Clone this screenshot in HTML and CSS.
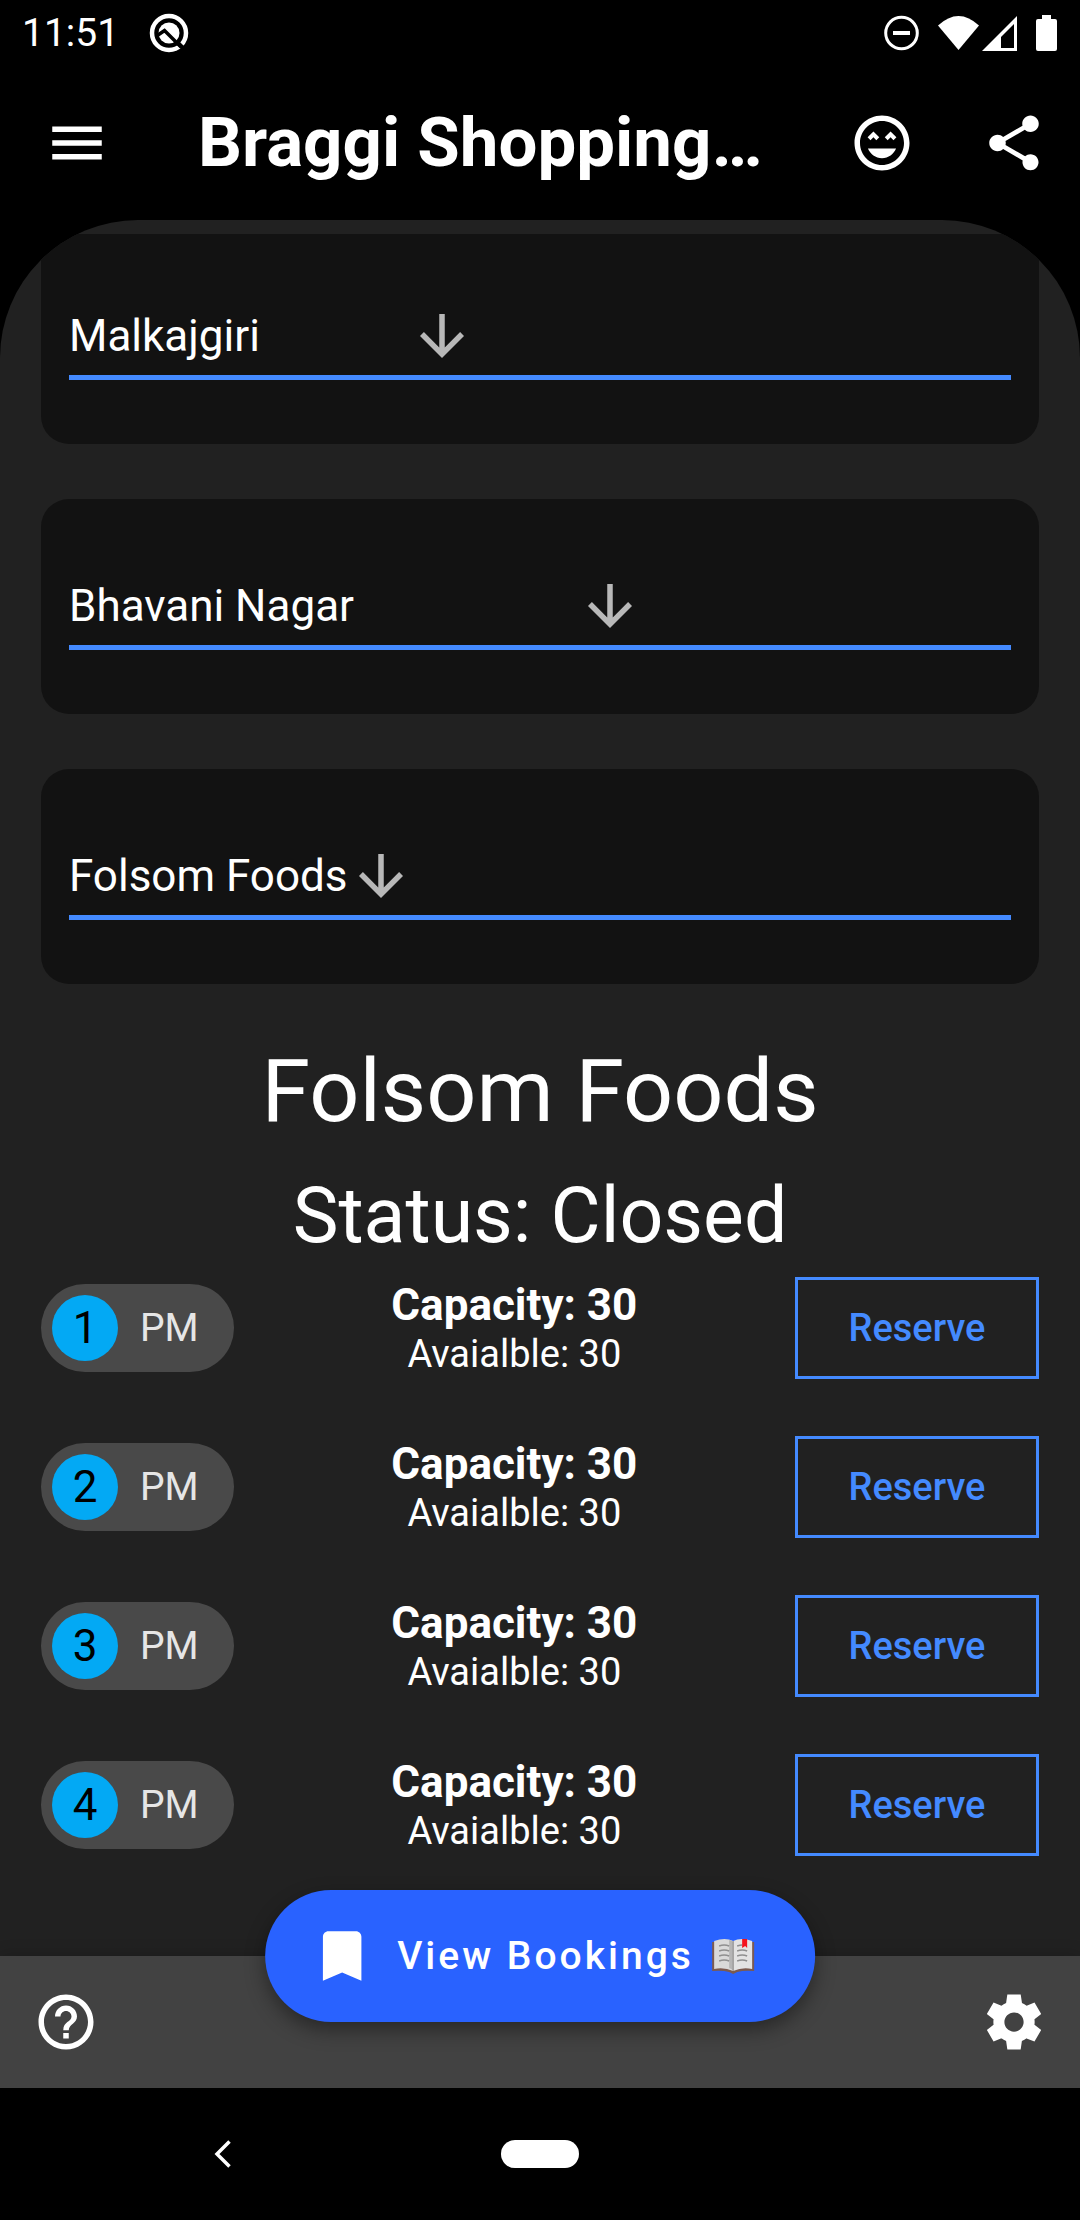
FILE: index.html
```html
<!DOCTYPE html>
<html lang="en">
<head>
<meta charset="utf-8">
<meta name="viewport" content="width=device-width, initial-scale=1">
<title>Braggi Shopping</title>
<link rel="stylesheet" href="styles.css">
</head>
<body>
<div class="statusbar">
  <time class="clock">11:51</time>
  <svg class="q-icon" viewBox="0 0 40 40" aria-hidden="true">
    <circle cx="20" cy="20" r="17" fill="none" stroke="#fff" stroke-width="4.500"/>
    <circle cx="20" cy="20" r="10.500" fill="#fff"/>
    <path d="M9 22 L15.500 17.500 L32 34" fill="none" stroke="#000" stroke-width="3.500"/>
    <path d="M29 30 L37 38" stroke="#000" stroke-width="4"/>
  </svg>
  <svg class="system-icons" viewBox="0 0 160 40" aria-hidden="true">
    <circle cx="18.500" cy="20" r="15.800" fill="none" stroke="#fff" stroke-width="3"/>
    <path d="M10 18h17v4H10z" fill="#fff"/>
    <path d="M55 12.500Q75.500-6.500 96 12.500L75.500 37z" fill="#fff"/>
    <path d="M99 38L134 3v35z" fill="#fff"/>
    <path d="M118 24L131 11v24h-13z" fill="#000"/>
  </svg>
  <svg class="battery-icon" viewBox="0 0 22 36" aria-hidden="true">
    <path d="M6 0h9v4h4q2 0 2 2v28q0 2-2 2H2q-2 0-2-2V6q0-2 2-2h4z" fill="#fff"/>
  </svg>
</div>

<header class="appbar">
  <button class="icon-button menu-button" type="button" aria-label="Open menu">
    <svg class="icon" viewBox="0 0 24 24"><path d="M3 18h18v-2H3v2zm0-5h18v-2H3v2zm0-7v2h18V6H3z"/></svg>
  </button>
  <h1 class="title">Braggi Shopping…</h1>
  <button class="icon-button" type="button" aria-label="Feedback">
    <svg class="icon" viewBox="0 0 24 24"><path d="M11.990 2C6.470 2 2 6.470 2 12s4.470 10 9.990 10S22 17.530 22 12 17.520 2 11.990 2zM12 20c-4.420 0-8-3.580-8-8s3.580-8 8-8 8 3.580 8 8-3.580 8-8 8zm1-10.060L14.060 11l1.060-1.060L16.180 11l1.060-1.060-2.120-2.120L13 9.940zM8.880 9.940L9.940 11 11 9.940 8.880 7.820 6.760 9.940 7.820 11l1.060-1.060zM12 17.500c2.330 0 4.310-1.460 5.110-3.500H6.890c.8 2.040 2.780 3.500 5.110 3.500z"/></svg>
  </button>
  <button class="icon-button" type="button" aria-label="Share">
    <svg class="icon" viewBox="0 0 24 24"><path d="M18 16.080c-.76 0-1.440.3-1.960.77L8.910 12.700c.05-.23.09-.46.09-.7s-.04-.47-.09-.7l7.050-4.110c.54.5 1.250.81 2.040.81 1.660 0 3-1.340 3-3s-1.340-3-3-3-3 1.340-3 3c0 .24.04.47.09.7L8.040 9.810C7.500 9.310 6.790 9 6 9c-1.660 0-3 1.340-3 3s1.340 3 3 3c.79 0 1.500-.31 2.040-.81l7.120 4.160c-.05.21-.08.43-.08.65 0 1.610 1.310 2.920 2.920 2.920s2.920-1.310 2.920-2.920-1.310-2.920-2.920-2.920z"/></svg>
  </button>
</header>

<main class="sheet">
  <div class="scroller">
    <div class="cards">
      <div class="card">
        <div class="field">
          <select class="picker picker-city" aria-label="City"><option>Malkajgiri</option></select>
          <svg class="icon arrow" viewBox="0 0 24 24" aria-hidden="true"><path d="M20 12l-1.410-1.410L13 16.170V4h-2v12.170l-5.580-5.590L4 12l8 8 8-8z"/></svg>
        </div>
      </div>
      <div class="card">
        <div class="field">
          <select class="picker picker-area" aria-label="Area"><option>Bhavani Nagar</option></select>
          <svg class="icon arrow" viewBox="0 0 24 24" aria-hidden="true"><path d="M20 12l-1.410-1.410L13 16.170V4h-2v12.170l-5.580-5.590L4 12l8 8 8-8z"/></svg>
        </div>
      </div>
      <div class="card">
        <div class="field">
          <select class="picker" aria-label="Shop"><option>Folsom Foods</option></select>
          <svg class="icon arrow" viewBox="0 0 24 24" aria-hidden="true"><path d="M20 12l-1.410-1.410L13 16.170V4h-2v12.170l-5.580-5.590L4 12l8 8 8-8z"/></svg>
        </div>
      </div>
    </div>

    <h2 class="shop-name">Folsom Foods</h2>
    <p class="shop-status">Status: Closed</p>

    <ul class="slots">
      <li class="slot">
        <div class="chip"><span class="hour">1</span><span class="period">PM</span></div>
        <div class="seats"><strong class="capacity">Capacity: 30</strong><span class="available">Avaialble: 30</span></div>
        <button class="reserve" type="button">Reserve</button>
      </li>
      <li class="slot">
        <div class="chip"><span class="hour">2</span><span class="period">PM</span></div>
        <div class="seats"><strong class="capacity">Capacity: 30</strong><span class="available">Avaialble: 30</span></div>
        <button class="reserve" type="button">Reserve</button>
      </li>
      <li class="slot">
        <div class="chip"><span class="hour">3</span><span class="period">PM</span></div>
        <div class="seats"><strong class="capacity">Capacity: 30</strong><span class="available">Avaialble: 30</span></div>
        <button class="reserve" type="button">Reserve</button>
      </li>
      <li class="slot">
        <div class="chip"><span class="hour">4</span><span class="period">PM</span></div>
        <div class="seats"><strong class="capacity">Capacity: 30</strong><span class="available">Avaialble: 30</span></div>
        <button class="reserve" type="button">Reserve</button>
      </li>
    </ul>
  </div>
</main>

<footer class="bottombar">
  <button class="icon-button" type="button" aria-label="Help">
    <svg class="icon" viewBox="0 0 24 24"><path d="M11 18h2v-2h-2v2zm1-16C6.480 2 2 6.480 2 12s4.480 10 10 10 10-4.480 10-10S17.520 2 12 2zm0 18c-4.410 0-8-3.590-8-8s3.590-8 8-8 8 3.590 8 8-3.590 8-8 8zm0-14c-2.210 0-4 1.790-4 4h2c0-1.100.9-2 2-2s2 .9 2 2c0 2-3 1.750-3 5h2c0-2.250 3-2.500 3-5 0-2.210-1.790-4-4-4z"/></svg>
  </button>
  <button class="fab" type="button">
    <svg class="icon" viewBox="0 0 24 24" aria-hidden="true"><path d="M17 3H7c-1.100 0-1.990.9-1.990 2L5 21l7-3 7 3V5c0-1.100-.9-2-2-2z"/></svg>
    <span class="fab-label">View Bookings</span>
    <svg class="book" viewBox="0 0 44 36" role="img" aria-label="open book">
      <path d="M1 4h42v29q-10-1-17 1l-4 2-4-2q-7-2-17-1z" fill="#7b5a50"/>
      <path d="M3 3Q14-1 22 3v30q-9-4-19-2z" fill="#d9d9d9"/>
      <path d="M41 3Q30-1 22 3v30q9-4 19-2z" fill="#e3e3e3"/>
      <path d="M18 2q3 0 4 2v29q-1-2-4-3z" fill="#b5b5b5"/>
      <path d="M22 3v30" stroke="#8c8c8c" stroke-width="1"/>
      <path d="M8 8q5-2 10 0M8 13q5-2 10 0M8 18q5-2 10 0M8 23q5-2 10 0M26 8q3-1 5-1M26 13q5-2 10 0M26 18q5-2 10 0M26 23q5-2 10 0" fill="none" stroke="#8f8f8f" stroke-width="1.500"/>
      <path d="M31 1l5 0v9l-2-2-3 2z" fill="#f4121d"/>
    </svg>
  </button>
  <button class="icon-button" type="button" aria-label="Settings">
    <svg class="icon" viewBox="0 0 24 24"><path d="M19.440 12.990l-.01.02c.04-.33.08-.67.08-1.010 0-.34-.03-.66-.07-.99l.01.02 2.440-1.920-2.430-4.220-2.870 1.160.01.01c-.52-.4-1.090-.74-1.710-1h.01L14.440 2H9.570l-.44 3.070h.01c-.62.26-1.190.6-1.710 1l.01-.01-2.880-1.170-2.440 4.220 2.440 1.920.01-.02c-.04.33-.07.65-.07.99 0 .34.03.68.08 1.010l-.01-.02-2.100 1.650-.33.26 2.430 4.200 2.880-1.150-.02-.04c.53.41 1.100.75 1.730 1.010h-.03L9.580 22h4.850s.03-.18.06-.42l.38-2.650h-.01c.62-.26 1.200-.6 1.730-1.010l-.02.04 2.880 1.150 2.430-4.200s-.14-.12-.33-.26l-2.110-1.660zM12 15.500c-1.930 0-3.500-1.570-3.500-3.500s1.570-3.500 3.500-3.500 3.500 1.570 3.500 3.500-1.570 3.500-3.500 3.500z"/></svg>
  </button>
</footer>

<nav class="navbar" aria-label="System">
  <button class="nav-back" type="button" aria-label="Back">
    <svg class="chevron" viewBox="0 0 18 28"><path d="M15.500 1.500L3 14l12.500 12.500" fill="none" stroke="#fff" stroke-width="3.500"/></svg>
  </button>
  <button class="nav-home" type="button" aria-label="Home"></button>
</nav>
</body>
</html>
```
FILE: styles.css
```css
* {
  box-sizing: border-box;
}

body {
  margin: 0;
  min-height: 100vh;
  display: flex;
  flex-direction: column;
  background: #000;
  color: #fff;
  font-family: Roboto, "Liberation Sans", sans-serif;
}

button {
  margin: 0;
  padding: 0;
  border: 0;
  background: none;
  color: inherit;
  font: inherit;
  cursor: pointer;
}

svg {
  display: block;
  flex: none;
}

.icon {
  width: 66px;
  height: 66px;
  fill: currentColor;
}

/* System status bar */
.statusbar {
  display: flex;
  align-items: center;
  height: 66px;
  padding: 0 22px;
}

.clock {
  font-size: 39px;
  line-height: 46px;
}

.q-icon {
  width: 40px;
  height: 40px;
  margin-left: 30px;
}

.system-icons {
  width: 160px;
  height: 40px;
  margin: 0 -7px 0 auto;
}

.battery-icon {
  width: 22px;
  height: 36px;
}

/* App bar */
.appbar {
  display: flex;
  align-items: center;
  height: 154px;
}

.icon-button {
  flex: none;
  display: flex;
  align-items: center;
  justify-content: center;
  width: 132px;
  height: 132px;
}

.menu-button {
  width: 154px;
}

.title {
  flex: 1;
  min-width: 0;
  margin: 0;
  padding-left: 44px;
  overflow: hidden;
  white-space: nowrap;
  text-overflow: ellipsis;
  font-size: 69px;
  line-height: 80px;
  font-weight: 700;
}

/* Content sheet */
.sheet {
  flex: 1;
  padding-top: 14px;
  overflow: hidden;
  border-radius: 138px 138px 0 0;
  background: #212121;
}

.scroller {
  overflow: hidden;
  padding: 0 41px;
}

.cards {
  display: grid;
  gap: 55px;
  margin-top: -5px;
}

.card {
  padding: 74px 28px 64px;
  border-radius: 28px;
  background: #121212;
}

.field {
  display: flex;
  align-items: center;
  padding-bottom: 6px;
  border-bottom: 5px solid #448aff;
}

.picker {
  appearance: none;
  margin: 0;
  padding: 0;
  border: 0;
  background: none;
  color: #fff;
  font: inherit;
  font-size: 44px;
  line-height: 52px;
}

.picker-city {
  width: 340px;
}

.picker-area {
  width: 508px;
}

.arrow {
  color: #b8b8b8;
}

.shop-name,
.shop-status {
  margin: 0;
  text-align: center;
  font-weight: 400;
}

.shop-name {
  margin-top: 55px;
  font-size: 88px;
  line-height: 104px;
}

.shop-status {
  margin-top: 28px;
  font-size: 77px;
  line-height: 91px;
}

/* Time slots */
.slots {
  display: grid;
  gap: 27px;
  margin: 0;
  padding: 0 0 78px;
  list-style: none;
}

.slot {
  display: flex;
  align-items: center;
  justify-content: space-between;
  height: 132px;
}

.chip {
  display: flex;
  align-items: center;
  gap: 22px;
  height: 88px;
  padding: 0 35px 0 11px;
  border-radius: 44px;
  background: #494949;
}

.hour {
  width: 66px;
  border-radius: 50%;
  background: #03a9f4;
  color: #000;
  text-align: center;
  font-size: 44px;
  line-height: 66px;
}

.period {
  color: #e6e6e6;
  font-size: 39px;
  line-height: 46px;
}

.seats {
  display: flex;
  flex-direction: column;
  align-items: center;
}

.capacity {
  font-size: 44px;
  line-height: 52px;
}

.available {
  font-size: 38px;
  line-height: 46px;
}

.reserve {
  width: 244px;
  height: 102px;
  border: 3px solid #448aff;
  color: #448aff;
  font-size: 38px;
  line-height: 46px;
  font-weight: 500;
}

/* Bottom app bar */
.bottombar {
  position: relative;
  display: flex;
  align-items: center;
  justify-content: space-between;
  height: 132px;
  background: #424242;
  box-shadow: 0 0 16px rgba(0, 0, 0, 0.2);
}

.fab {
  position: absolute;
  top: 0;
  left: 50%;
  transform: translate(-50%, -50%);
  display: flex;
  align-items: center;
  height: 132px;
  padding: 0 60px 0 44px;
  border-radius: 66px;
  background: #2962ff;
  box-shadow: 0 8px 20px rgba(0, 0, 0, 0.4);
  white-space: nowrap;
}

.fab-label {
  margin: 0 17px 0 22px;
  font-size: 39px;
  line-height: 46px;
  font-weight: 500;
  letter-spacing: 3px;
}

.book {
  width: 44px;
  height: 36px;
}

/* System navigation */
.navbar {
  display: grid;
  grid-template-columns: 1fr auto 1fr;
  align-items: center;
  height: 132px;
}

.nav-back {
  justify-self: center;
  padding: 20px;
  margin-right: 56px;
}

.chevron {
  width: 18px;
  height: 28px;
}

.nav-home {
  width: 78px;
  height: 28px;
  border-radius: 14px;
  background: #fff;
}
```
